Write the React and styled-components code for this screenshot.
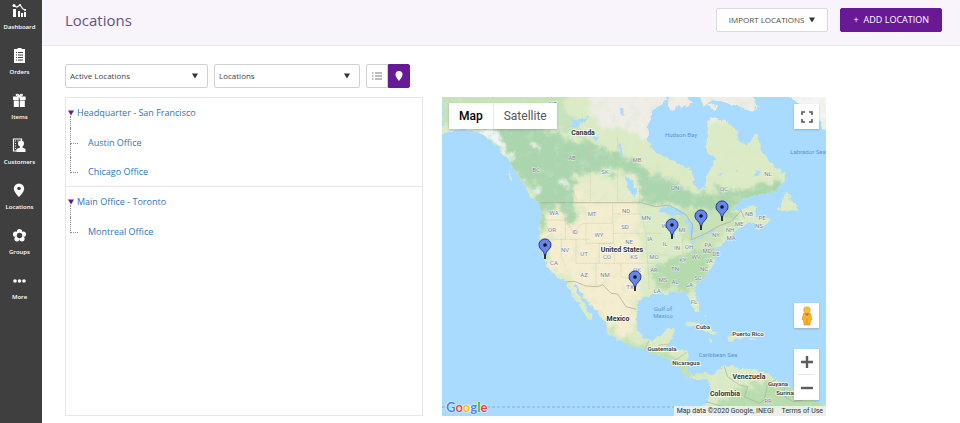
import React from 'react';
import styled, {createGlobalStyle} from 'styled-components';

const GlobalStyle = createGlobalStyle`
    * {
        box-sizing: border-box;
    }
    body {
        margin: 0;
        background: #fff;
        font-family: "Open Sans", sans-serif;
        color: #444;
    }
    button, select {
        font-family: inherit;
        margin: 0;
        cursor: pointer;
    }
    svg {
        display: block;
    }
`;

const Page = styled.div`
    display: flex;
    min-height: 100vh;
`;

const Sidebar = styled.nav`
    display: flex;
    flex-direction: column;
    flex: none;
    width: 42px;
    padding-top: 3px;
    background: #3f3f3f;
`;

const NavItem = styled.a`
    display: flex;
    flex-direction: column;
    align-items: center;
    gap: 4px;
    height: 45px;
    margin-right: 3px;
    color: #fff;
    font-size: 6px;
    font-weight: 600;
    line-height: 8px;
    text-decoration: none;
`;

const Main = styled.main`
    flex: 1;
    min-width: 0;
`;

const Header = styled.header`
    display: flex;
    align-items: center;
    gap: 12px;
    height: 46px;
    padding: 0 18px 6px 23px;
    border-bottom: 1px solid #eee8f3;
    background: #f9f4fc;
`;

const Title = styled.h1`
    flex: 1;
    margin: 0;
    color: #62567a;
    font-size: 15px;
    font-weight: 400;
    line-height: 24px;
`;

const Button = styled.button`
    display: flex;
    align-items: center;
    justify-content: center;
    gap: 5px;
    height: 24px;
    padding: 0 12px;
    border: 1px solid ${props => props.$primary ? '#681a96' : '#dcd8e0'};
    border-radius: 2px;
    background: ${props => props.$primary ? '#681a96' : '#fff'};
    color: ${props => props.$primary ? '#fff' : '#4c4c4c'};
    font-size: ${props => props.$primary ? 9 : 8}px;
    white-space: nowrap;
`;

const Content = styled.div`
    padding: 18px 18px 6px 23px;
`;

const Toolbar = styled.div`
    display: flex;
    gap: 6px;
    margin-bottom: 9px;
`;

const SelectBox = styled.div`
    display: flex;
    position: relative;
    width: ${props => props.$width}px;

    svg {
        position: absolute;
        top: 9px;
        right: 10px;
        pointer-events: none;
    }
`;

const Select = styled.select`
    width: 100%;
    height: 24px;
    padding: 0 20px 1px 4px;
    border: 1px solid #d2d2d2;
    border-radius: 2px;
    appearance: none;
    background: #fff;
    color: #444;
    font-size: 8px;
`;

const Toggle = styled.div`
    display: flex;
`;

const ToggleButton = styled.button`
    display: flex;
    align-items: center;
    justify-content: center;
    width: 22px;
    height: 24px;
    padding: 0;
    border: 1px solid ${props => props.$active ? '#681a96' : '#d2d2d2'};
    border-radius: ${props => props.$active ? '0 2px 2px 0' : '2px 0 0 2px'};
    background: ${props => props.$active ? '#681a96' : '#fff'};
`;

const Columns = styled.div`
    display: grid;
    grid-template-columns: 358fr 384fr 97fr;
    gap: 19px;
`;

const Tree = styled.section`
    border: 1px solid #e6e6ec;
`;

const Group = styled.div`
    padding-left: 2px;
    border-bottom: ${props => props.$last ? 0 : 1}px solid #e6e6ec;
`;

const GroupRow = styled.div`
    display: flex;
    align-items: center;
    gap: 3px;
    height: 30px;
`;

const Expander = styled.button`
    display: flex;
    flex-direction: column;
    align-self: stretch;
    padding: 12px 0 0;
    border: 0;
    background: none;

    &::after {
        content: "";
        flex: 1;
        margin-left: 2px;
        border-left: 1px dotted #8c8c8c;
    }
`;

const TreeLink = styled.a`
    color: #2e74bd;
    font-size: 9px;
    line-height: 12px;
    text-decoration: none;
`;

const Children = styled.ul`
    margin: 0;
    padding: 0 0 0 2px;
    list-style: none;
`;

const Child = styled.li`
    display: flex;
    align-items: center;
    gap: 10px;
    height: 29px;
`;

const Branch = styled.span`
    display: flex;
    flex-direction: column;
    align-self: stretch;
    width: 8px;

    &::before {
        content: "";
        height: 15px;
        border-left: 1px dotted #8c8c8c;
        border-bottom: 1px dotted #8c8c8c;
    }
    &::after {
        content: "";
        flex: 1;
        border-left: ${props => props.$last ? 0 : 1}px dotted #8c8c8c;
    }
`;

const MapBox = styled.section`
    position: relative;
    align-self: start;
    overflow: hidden;
    background: #a9daff;
    font-family: Roboto, sans-serif;
`;

const MapCanvas = styled.svg`
    width: 100%;
    height: auto;
`;

const MapTypes = styled.div`
    display: flex;
    position: absolute;
    top: 6px;
    left: 7px;
    background: #fff;
    box-shadow: 0 1px 2px rgba(0, 0, 0, 0.2);
`;

const MapType = styled.button`
    height: 26px;
    padding: 0 10px;
    border: 0;
    border-left: ${props => props.$active ? 0 : 1}px solid #e8e8e8;
    background: none;
    color: ${props => props.$active ? '#000' : '#565656'};
    font-size: 12px;
    font-weight: ${props => props.$active ? 500 : 400};
`;

const MapControls = styled.div`
    display: flex;
    flex-direction: column;
    position: absolute;
    ${props => props.$top ? 'top: 7px' : 'bottom: 16px'};
    right: 7px;
    gap: 21px;
`;

const ControlGroup = styled.div`
    background: #fff;
    box-shadow: 0 1px 2px rgba(0, 0, 0, 0.2);
`;

const ControlButton = styled.button`
    display: flex;
    align-items: center;
    justify-content: center;
    width: 25px;
    height: 25px;
    padding: 0;
    border: 0;
    background: none;
`;

const Separator = styled.hr`
    height: 1px;
    margin: 0 4px;
    border: 0;
    background: #e6e6e6;
`;

const Attribution = styled.div`
    display: flex;
    gap: 8px;
    position: absolute;
    right: 0;
    bottom: 0;
    padding: 0 3px;
    background: rgba(245, 245, 245, 0.8);
    color: #333;
    font-size: 7px;
    line-height: 10px;
    white-space: nowrap;

    a {
        color: inherit;
        text-decoration: none;
    }
`;

const Logo = styled.a`
    position: absolute;
    left: 4px;
    bottom: 0;
    font-family: Lato, sans-serif;
    font-size: 13px;
    font-weight: 700;
    line-height: 18px;
    text-decoration: none;
    text-shadow: 0 0 1px #fff, 0 0 1px #fff, 0 0 2px #fff;
`;

const Letter = styled.span`
    color: ${props => props.$color};
`;

const MapLabel = styled.text`
    fill: ${props => props.$water ? '#5b96d0' : props.$state ? '#72839b' : '#333'};
    stroke: ${props => props.$water ? 'none' : '#fff'};
    stroke-width: ${props => props.$state ? 1 : 2}px;
    stroke-opacity: 0.7;
    paint-order: stroke;
    font-size: ${props => props.$big ? 7 : 6}px;
    font-weight: ${props => props.$big ? 700 : props.$state || props.$water ? 400 : 500};
    text-anchor: middle;
`;

const icons = {
    dashboard: (
        <g fill="#fff">
            <path d="M1 6h3v8H1zM6 8h2v6H6zM9 10h2v4H9zM12 9h2v5h-2z"/>
            <path d="M2 3l3 1 3-2 3 4 3 1" fill="none" stroke="#fff" strokeWidth="1.2"/>
            <circle cx="2" cy="2.500" r="1.500"/>
            <circle cx="8" cy="2" r="1"/>
            <circle cx="13" cy="7" r="1"/>
        </g>
    ),
    orders: (
        <g>
            <path d="M2 1h3l1-1h3l1 1h3v14H2z" fill="#fff"/>
            <path d="M4 4.500h1M6 4.500h5M4 7h1M6 7h5M4 9.500h1M6 9.500h5M4 12h1M6 12h5" stroke="#3f3f3f" strokeWidth="1"/>
        </g>
    ),
    items: (
        <g>
            <path d="M1 3.500h5.800V7H1zM7.800 3.500h5.800V7H7.800zM1.800 7.500h5V14h-5zM7.800 7.500h5V14h-5z" fill="#fff"/>
            <path d="M7.300 3.500Q4 3 4.300 1.500Q6.300 .5 7.300 3.500Q8.300 .5 10.300 1.500Q10.300 3 7.300 3.500" fill="none" stroke="#fff" strokeWidth="1.200"/>
        </g>
    ),
    customers: (
        <g>
            <path d="M1.500 1h8v12h-8z" fill="none" stroke="#fff" strokeWidth="1.200"/>
            <path d="M3 3h1M3 5.500h1M3 8h1M3 10.500h1M5.500 3h1" stroke="#fff" strokeWidth="1.200"/>
            <circle cx="9" cy="5.500" r="3" fill="#fff"/>
            <path d="M8 7h2.500v2.500l3 1.500v3H4.500v-3L8 9.500z" fill="#fff"/>
        </g>
    ),
    locations: (
        <path
            d="M7 .5a5.200 5.200 0 0 0-5.200 5.200C1.800 9 7 14 7 14s5.200-5 5.200-8.300A5.200 5.200 0 0 0 7 .5zm0 3.200a1.800 1.800 0 1 1 0 3.600 1.800 1.800 0 0 1 0-3.600z"
            fill="#fff"
        />
    ),
    groups: (
        <g>
            <g fill="#fff">
                <circle cx="7.500" cy="3.500" r="2.600"/>
                <circle cx="3.600" cy="6.200" r="2.600"/>
                <circle cx="11.400" cy="6.200" r="2.600"/>
                <circle cx="5" cy="10.800" r="2.600"/>
                <circle cx="10" cy="10.800" r="2.600"/>
            </g>
            <circle cx="7.500" cy="7.500" r="2.700" fill="#3f3f3f"/>
        </g>
    ),
    more: (
        <g fill="#fff">
            <circle cx="3" cy="8" r="1.800"/>
            <circle cx="7.500" cy="8" r="1.800"/>
            <circle cx="12" cy="8" r="1.800"/>
        </g>
    ),
};

const navigation = [
    {label: 'Dashboard', icon: 'dashboard'},
    {label: 'Orders', icon: 'orders'},
    {label: 'Items', icon: 'items'},
    {label: 'Customers', icon: 'customers'},
    {label: 'Locations', icon: 'locations'},
    {label: 'Groups', icon: 'groups'},
    {label: 'More', icon: 'more'},
];

const groups = [
    {name: 'Headquarter - San Francisco', children: ['Austin Office', 'Chicago Office']},
    {name: 'Main Office - Toronto', children: ['Montreal Office']},
];

// tip of each pin, in map units
const pins = [
    {name: 'San Francisco', x: 103, y: 162},
    {name: 'Austin', x: 193, y: 194},
    {name: 'Chicago', x: 230, y: 142},
    {name: 'Toronto', x: 259, y: 133},
    {name: 'Montreal', x: 280, y: 124},
];

const countries = [
    ['Canada', 141, 38], ['United States', 180, 155], ['Mexico', 176, 224],
    ['Venezuela', 307, 282], ['Colombia', 283, 299],
];

const places = [
    ['Cuba', 261, 232], ['Puerto Rico', 306, 239], ['Guatemala', 220, 254],
    ['Nicaragua', 244, 268], ['Guyana', 336, 289], ['Suriname', 347, 298],
];

const waters = [
    ['Hudson Bay', 239, 40], ['Labrador Sea', 366, 57], ['Gulf of', 221, 214],
    ['Mexico', 221, 221], ['Caribbean Sea', 276, 260],
];

const states = [
    ['AB', 130, 63], ['BC', 94, 75], ['SK', 163, 77], ['MB', 195, 65], ['ON', 233, 93], ['QC', 282, 94],
    ['NL', 326, 79], ['NT', 111, 9], ['WA', 112, 118], ['MT', 150, 119], ['ND', 184, 116], ['MN', 204, 123],
    ['OR', 110, 135], ['ID', 133, 137], ['WY', 157, 140], ['SD', 183, 132], ['NE', 187, 147], ['NV', 123, 155],
    ['UT', 142, 159], ['CO', 165, 162], ['KS', 192, 162], ['MO', 212, 162], ['IA', 208, 144], ['WI', 223, 131],
    ['MI', 240, 135], ['IL', 223, 149], ['IN', 235, 153], ['OH', 247, 152], ['NY', 274, 140], ['PA', 266, 150],
    ['NH', 288, 135], ['ME', 297, 129], ['MA', 289, 143], ['NB', 307, 119], ['PE', 320, 123], ['NS', 317, 131],
    ['MD', 265, 156], ['DE', 274, 159], ['KY', 241, 165], ['WV', 254, 162], ['VA', 267, 166], ['TN', 233, 174],
    ['NC', 262, 174], ['CA', 112, 168], ['AZ', 142, 180], ['NM', 163, 180], ['OK', 195, 175], ['TX', 188, 192],
    ['AR', 212, 175], ['MS', 221, 185], ['AL', 233, 187], ['GA', 247, 190], ['SC', 256, 183], ['LA', 215, 196],
    ['FL', 252, 207], ['RR', 326, 306],
];

const mainland = 'M8 10L8 135 22 126 60 118 90 122 120 128 150 150 175 175 200 200 215 225 235 250 250 275 265 295 290 320 302 345 306 370 300 400 298 440 300 465 312 500 325 530 350 555 375 574 390 595 400 620 420 640 432 665 450 690 457 688 450 670 440 650 425 625 410 600 402 586 415 590 425 610 445 635 465 655 485 680 500 700 505 725 515 740 550 758 590 773 620 782 650 792 680 803 705 818 720 833 735 853 750 864 775 870 800 866 812 875 815 900 800 935 780 955 770 990H1170V940L1130 935 1100 920 1065 905 1045 885 1010 870 985 850 940 838 900 836 880 825 855 828 830 845 812 860 800 848 780 850 765 855 750 845 740 825 745 800 745 782 720 780 695 780 680 770 700 740 705 715 680 715 665 740 640 750 610 745 595 720 588 690 590 655 600 630 625 618 650 610 665 605 680 615 700 605 735 605 750 625 760 650 772 668 780 660 775 635 765 605 775 580 800 555 820 530 825 500 830 475 855 455 880 435 885 425 905 410 940 395 950 415 975 412 995 388 975 380 950 378 950 350 930 345 900 360 880 360 900 335 940 318 975 310 1010 300 1038 275 1035 250 1010 235 985 205 965 180 950 125 940 150 925 165 900 155 885 110 860 95 820 80 805 92 805 130 800 160 805 190 832 205 805 250 795 290 775 297 762 285 765 260 755 235 720 225 680 200 645 185 625 150 625 100 650 50 670 38 690 10Z';

const islands = 'M690 10L740 21 758 38 742 50 718 45 700 62 690 50Z M778 10H940L950 45 947 62 925 60 890 45 862 40 820 30 790 45Z M1040 10H1170V118L1150 118 1135 75 1110 55 1065 30Z M1015 358L1030 335 1040 305 1052 308 1050 330 1072 340 1075 362 1045 362Z M735 703L765 695 800 710 838 730 815 732 780 710Z M860 740L885 730 918 745 890 750 868 755Z M932 745h16v6h-16z M803 748l20 2-4 6z M253 286L275 300 308 340 300 342 270 315Z M208 243l8 8 2 24-8-8z M797 668l8 8-2 6z M795 40l40 8-8 16z';

const borealForest = 'M100 60L200 90 300 110 390 150 450 155 540 195 620 235 700 275 760 305 850 300 930 300 1030 270 1045 310 900 340 880 370 900 400 850 400 800 360 730 350 640 345 605 335 595 250 520 245 440 245 405 255 410 400 385 410 370 360 335 345 320 440 300 440 290 320 200 200 100 120Z';

const CaretDown = ({color = '#333'}) => (
    <svg width="6" height="6" viewBox="0 0 6 6" aria-hidden="true">
        <path d="M0 .5h6L3 5.500z" fill={color}/>
    </svg>
);

const Dropdown = ({label, width, options}) => (
    <SelectBox $width={width}>
        <Select aria-label={label}>
            {options.map(option => <option key={option}>{option}</option>)}
        </Select>
        <CaretDown/>
    </SelectBox>
);

const Terrain = () => (
    <g transform="scale(0.33333) translate(-8 -21)">
        <defs>
            <filter id="coast" x="0" y="0" width="100%" height="100%">
                <feTurbulence type="fractalNoise" baseFrequency="0.06" numOctaves="3" seed="4"/>
                <feDisplacementMap in="SourceGraphic" scale="18" xChannelSelector="R" yChannelSelector="G"/>
            </filter>
            <filter id="cover" x="-10%" y="-10%" width="120%" height="120%">
                <feTurbulence type="fractalNoise" baseFrequency="0.04" numOctaves="4" seed="9" result="noise"/>
                <feDisplacementMap in="SourceGraphic" in2="noise" scale="60" xChannelSelector="R" yChannelSelector="G"/>
                <feGaussianBlur stdDeviation="4"/>
            </filter>
            <filter id="mottle" x="0" y="0" width="100%" height="100%">
                <feTurbulence type="fractalNoise" baseFrequency="0.035" numOctaves="4" seed="2"/>
                <feColorMatrix values="0 0 0 0 0.62  0 0 0 0 0.82  0 0 0 0 0.6  4 0 0 0 -2.1"/>
            </filter>
            <clipPath id="land">
                <path d={mainland}/>
                <path d={islands}/>
            </clipPath>
        </defs>
        <g filter="url(#coast)">
            <rect x="-20" y="-20" width="1220" height="1040" fill="#a9daff"/>
            <g clipPath="url(#land)">
                <rect width="1180" height="1000" fill="#dcebc5"/>
                <g filter="url(#cover)">
                    <path d="M450 0H1000V50L900 75 850 90 760 100 620 150 560 120 480 110 450 60Z" fill="#efede6"/>
                    <path d="M1010 0H1180V130H1010Z" fill="#f4f4f2"/>
                    <path d="M0 0H380L370 60 250 50 120 70 0 110Z" fill="#c6e2b8"/>
                    <path d={borealForest} fill="#aad5ad"/>
                    <path d="M230 30L380 60 430 120 380 130 280 80Z" fill="#c6e3bb"/>
                    <path d="M405 270L580 270 590 345 600 430 610 560 590 640 575 740 530 730 460 640 390 570 330 540 305 465 320 360 360 350 400 420 430 360Z" fill="#f5edcf"/>
                    <path d="M410 260L580 260 595 335 440 340Z" fill="#e6eccc"/>
                    <path d="M640 530L760 480 840 460 810 540 760 600 650 600Z" fill="#b5daac"/>
                    <path d="M680 370L850 360 890 400 830 460 760 470 700 400Z" fill="#c8e2b6"/>
                    <path d="M490 690L560 750 700 790 800 860 730 860 560 770Z" fill="#c1e0b1"/>
                    <path d="M900 890L1060 870 1170 950V1000H780L820 960Z" fill="#b9dcae"/>
                    <path d="M300 360L318 360 320 450 335 520 315 500 300 450Z" fill="#b5d9ae"/>
                    <path d="M335 345L362 345 385 400 410 405 415 360 390 330Z" fill="#aad5ad"/>
                </g>
                <rect width="1180" height="1000" filter="url(#mottle)" opacity="0.3"/>
                <g fill="#fafafa" opacity="0.9" filter="url(#cover)">
                    <path d="M90 108L150 118 190 155 230 205 215 212 170 165 130 135Z"/>
                    <circle cx="295" cy="170" r="10"/>
                    <circle cx="290" cy="300" r="13"/>
                    <circle cx="370" cy="280" r="12"/>
                </g>
            </g>
            <g fill="#a9daff">
                <path d="M380 75l35 20 35-20-15 22-28 14-22-2 18-10z"/>
                <path d="M560 262l18 6 15 45-8 6-24-30z"/>
                <path d="M535 160l10 10 6 30-10-6zM455 145l28-4-10 12zM540 55h12v16h-12z"/>
                <path d="M655 362L690 348 730 362 738 378 710 376 680 372Z"/>
                <path d="M695 440L700 395 718 388 708 415 706 445Z"/>
                <path d="M735 382L762 400 768 425 752 436 745 410Z"/>
                <path d="M745 455L795 436 790 443 755 460Z"/>
                <path d="M785 430L825 418 818 428 790 436Z"/>
                <path d="M948 240h12v18h-12zM890 236l8 4-6 10zM830 255l20-7-4 9z"/>
            </g>
        </g>
        <g fill="none" stroke="#a9a79b" strokeWidth="2">
            <path d="M305 338H605L650 350 690 345 740 375 760 405 755 450 800 430 845 405 875 395 905 362 915 385"/>
            <path d="M378 576L405 574 440 588 475 590 490 584 515 610 535 612 560 650 592 658" stroke="#b49f91"/>
            <path d="M855 830L865 860 900 885 925 890 915 920 960 940 975 930 985 880 1010 870M1040 885L1030 915 1060 935 1090 930 1100 920M800 935L850 950 870 990" stroke="#9db39c"/>
            <path d="M660 790V765L690 762M700 815L745 785M615 782L630 750" stroke="#b5b8a6"/>
        </g>
        <g fill="none" stroke="#cfc5ae" strokeWidth="1.5" strokeDasharray="5 2">
            <path d="M318 390H378V448M305 448H450M378 345V390L400 425 430 400H520V338M440 400V460H522V400M520 372H605M520 430H610M366 448V500L378 530M410 448V520H480V460M480 520H620M470 520V590M475 460H525V520M545 520V560L600 575M522 475H620"/>
            <path d="M360 130V250L420 338M453 140V338M535 140V338M600 240V340M605 372L620 430 625 520 630 600M620 430H670M625 520H720M660 540V605M690 540V605M720 545V605M640 495H690M730 440V510M760 460L770 510M625 490L660 490"/>
        </g>
        <path d="M8 951H1160" stroke="#8599b4" strokeWidth="2" strokeDasharray="9 6"/>
    </g>
);

const Pin = ({x, y, name}) => (
    <g transform={`translate(${x} ${y})`}>
        <title>{name}</title>
        <path
            d="M0 0C-.6-5-1-6.500-3.200-9A6 6 0 1 1 3.200-9C1-6.500 .6-5 0 0z"
            fill="#6486ee"
            stroke="#23386e"
            strokeWidth="1"
        />
        <path d="M0 0V-5" stroke="#222" strokeWidth="1.500"/>
        <circle cx="0" cy="-14" r="1.800" fill="#111"/>
    </g>
);

const LocationMap = () => (
    <MapBox>
        <MapCanvas viewBox="0 0 384 319" role="img" aria-label="Map of locations">
            <Terrain/>
            {states.map(([name, x, y]) => <MapLabel key={name} x={x} y={y} $state>{name}</MapLabel>)}
            {waters.map(([name, x, y]) => <MapLabel key={name} x={x} y={y} $water>{name}</MapLabel>)}
            {places.map(([name, x, y]) => <MapLabel key={name} x={x} y={y}>{name}</MapLabel>)}
            {countries.map(([name, x, y]) => <MapLabel key={name} x={x} y={y} $big>{name}</MapLabel>)}
            {pins.map(pin => <Pin key={pin.name} {...pin}/>)}
        </MapCanvas>

        <MapTypes>
            <MapType $active>Map</MapType>
            <MapType>Satellite</MapType>
        </MapTypes>

        <MapControls $top>
            <ControlGroup>
                <ControlButton aria-label="Full screen">
                    <svg width="12" height="12" viewBox="0 0 12 12">
                        <path d="M1 4V1h3M8 1h3v3M11 8v3H8M4 11H1V8" fill="none" stroke="#555" strokeWidth="1.600"/>
                    </svg>
                </ControlButton>
            </ControlGroup>
        </MapControls>

        <MapControls>
            <ControlGroup>
                <ControlButton aria-label="Street view">
                    <svg width="12" height="20" viewBox="0 0 12 20">
                        <path d="M2.500 7.500h7l1.500 6-1.500.5L9 19H3l-.5-5-1.500-.5z" fill="#f5b32b" stroke="#d98b1b" strokeWidth=".6"/>
                        <circle cx="6" cy="4" r="3.300" fill="#fbc02d" stroke="#d98b1b" strokeWidth=".5"/>
                        <path d="M3.500 7.500h5L6 10z" fill="#d5701b"/>
                        <path d="M6 13v6" stroke="#d98b1b" strokeWidth=".8"/>
                    </svg>
                </ControlButton>
            </ControlGroup>
            <ControlGroup>
                <ControlButton aria-label="Zoom in">
                    <svg width="12" height="12" viewBox="0 0 12 12">
                        <path d="M0 6h12M6 0v12" stroke="#5c5c5c" strokeWidth="2.400"/>
                    </svg>
                </ControlButton>
                <Separator/>
                <ControlButton aria-label="Zoom out">
                    <svg width="12" height="12" viewBox="0 0 12 12">
                        <path d="M0 6h12" stroke="#5c5c5c" strokeWidth="2.400"/>
                    </svg>
                </ControlButton>
            </ControlGroup>
        </MapControls>

        <Logo href="#google" aria-label="Google">
            <Letter $color="#4285f4">G</Letter>
            <Letter $color="#ea4335">o</Letter>
            <Letter $color="#fbbc05">o</Letter>
            <Letter $color="#4285f4">g</Letter>
            <Letter $color="#34a853">l</Letter>
            <Letter $color="#ea4335">e</Letter>
        </Logo>
        <Attribution>
            <span>Map data ©2020 Google, INEGI</span>
            <a href="#terms">Terms of Use</a>
        </Attribution>
    </MapBox>
);

const LocationTree = () => (
    <Tree>
        {groups.map((group, index) => (
            <Group key={group.name} $last={index === groups.length - 1}>
                <GroupRow>
                    <Expander aria-label={`Collapse ${group.name}`}>
                        <CaretDown color="#681a96"/>
                    </Expander>
                    <TreeLink href="#location">{group.name}</TreeLink>
                </GroupRow>
                <Children>
                    {group.children.map((child, i) => (
                        <Child key={child}>
                            <Branch $last={i === group.children.length - 1}/>
                            <TreeLink href="#location">{child}</TreeLink>
                        </Child>
                    ))}
                </Children>
            </Group>
        ))}
    </Tree>
);

const App = () => (
    <Page>
        <GlobalStyle/>
        <Sidebar>
            {navigation.map(item => (
                <NavItem key={item.label} href={`#${item.icon}`}>
                    <svg width="15" height="16" viewBox="0 0 15 16" aria-hidden="true">{icons[item.icon]}</svg>
                    {item.label}
                </NavItem>
            ))}
        </Sidebar>
        <Main>
            <Header>
                <Title>Locations</Title>
                <Button>IMPORT LOCATIONS <CaretDown/></Button>
                <Button $primary><span>+</span> ADD LOCATION</Button>
            </Header>
            <Content>
                <Toolbar>
                    <Dropdown label="Status" width={143} options={['Active Locations', 'Inactive Locations']}/>
                    <Dropdown label="Show" width={146} options={['Locations', 'Groups']}/>
                    <Toggle>
                        <ToggleButton aria-label="List view">
                            <svg width="10" height="8" viewBox="0 0 10 8">
                                <path d="M0 1h1.500M3 1h7M0 4h1.500M3 4h7M0 7h1.500M3 7h7" stroke="#777" strokeWidth="1"/>
                            </svg>
                        </ToggleButton>
                        <ToggleButton $active aria-label="Map view">
                            <svg width="8" height="10" viewBox="0 0 8 10">
                                <path d="M4 0a3.500 3.500 0 0 0-3.500 3.500C.5 6 4 10 4 10s3.500-4 3.500-6.500A3.500 3.500 0 0 0 4 0z" fill="#fff"/>
                            </svg>
                        </ToggleButton>
                    </Toggle>
                </Toolbar>
                <Columns>
                    <LocationTree/>
                    <LocationMap/>
                </Columns>
            </Content>
        </Main>
    </Page>
);

export default App;
